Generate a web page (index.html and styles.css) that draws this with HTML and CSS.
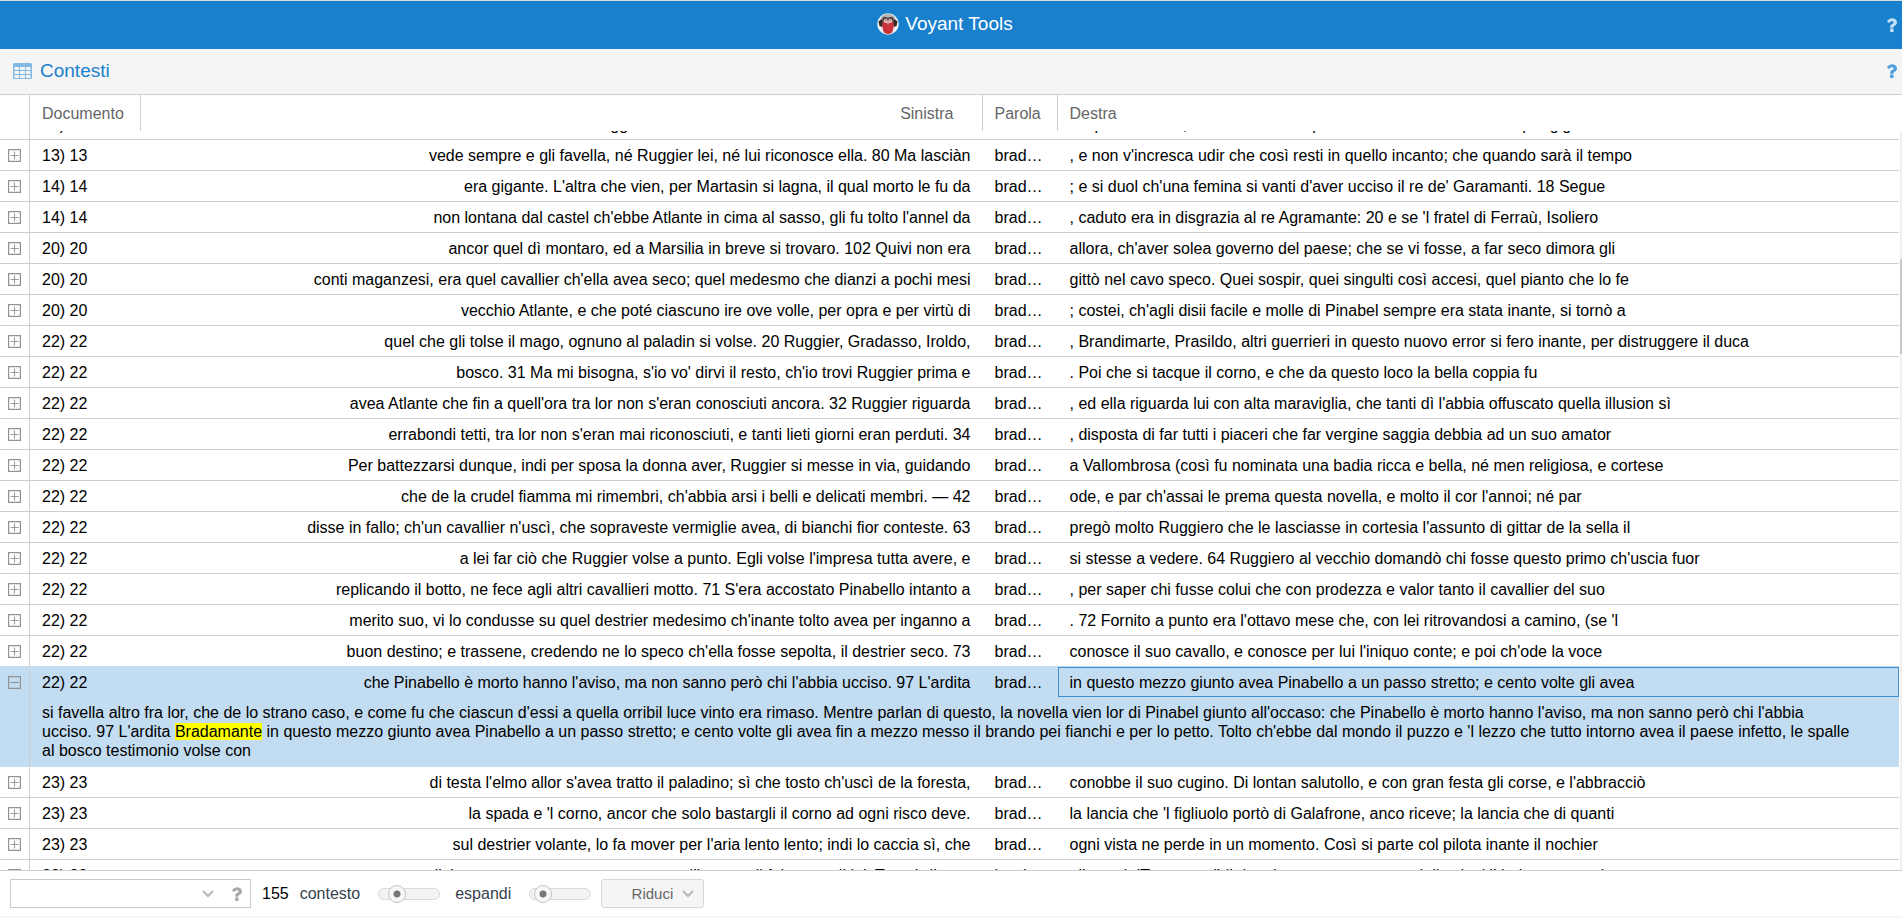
FILE: index.html
```html
<!DOCTYPE html>
<html lang="it">
<head>
<meta charset="utf-8">
<title>Voyant Tools</title>
<link rel="stylesheet" href="styles.css">
</head>
<body>
<svg class="defs" aria-hidden="true">
  <symbol id="help" viewBox="384 256 1024 1280"><path d="M1088 1256v240q0 16-12 28t-28 12h-240q-16 0-28-12t-12-28v-240q0-16 12-28t28-12h240q16 0 28 12t12 28zm316-600q0 54-15.500 101t-35 76.500-55 59.500-57.500 43.500-61 35.500q-41 23-68.500 65t-27.500 67q0 17-12 32.500t-28 15.500h-240q-15 0-25.500-18.500t-10.500-37.500v-45q0-83 65-156.500t143-108.500q59-27 84-56t25-76q0-42-46.500-74t-107.500-32q-65 0-108 29-35 25-107 115-13 16-31 16-12 0-25-8l-164-125q-13-10-15.500-25t5.500-28q160-266 464-266 80 0 161 31t146 83 106 127.500 41 158.500z"/></symbol>
  <symbol id="plus" viewBox="0 0 13 13"><path d="M.6.6h11.800v11.800H.6z" fill="none" stroke="#939393" stroke-width="1.250"/><path d="M2.500 6.500h8M6.500 2.500v8" stroke="#9c9c9c" stroke-width="1.100"/></symbol>
  <symbol id="minus" viewBox="0 0 13 13"><path d="M.6.6h11.800v11.800H.6z" fill="none" stroke="#939393" stroke-width="1.250"/><path d="M2.500 6.500h8" stroke="#939393" stroke-width="1.100"/></symbol>
  <symbol id="chevron" viewBox="0 0 12 8"><path d="M1 1l5 5 5-5" fill="none" stroke="#b8b8b8" stroke-width="2"/></symbol>
</svg>
<div class="app">
  <header class="titlebar">
    <h1 class="brand">
      <svg class="logo" viewBox="0 0 22 22" aria-hidden="true">
        <circle cx="11" cy="11" r="10.700" fill="#eef0f1"/>
        <path d="M3.500 5Q11-3.500 18.500 5L17 7H5z" fill="#b3b6b8"/>
        <path d="M1.500 8.500l3-2.500 2 3-1.500 5-2.500-1z" fill="#33292b"/>
        <path d="M20.500 8.500l-3-2.500-2 3 1.500 5 2.500-1z" fill="#33292b"/>
        <path d="M5.500 4.500L8 3.500l1.500 1h3L14 3.500l2.500 1 .5 5H5z" fill="#5a4346"/>
        <path d="M5.500 9q5.500-2.500 11 0 1 7-2 11-3.500 2-7 0-3-4-2-11z" fill="#c8323b"/>
        <circle cx="8.800" cy="8" r="2.100" fill="#edc9ca"/><circle cx="13.200" cy="8" r="2.100" fill="#edc9ca"/>
        <circle cx="9" cy="7.500" r=".7" fill="#6b4a50"/><circle cx="13" cy="7.500" r=".7" fill="#6b4a50"/>
        <path d="M10 9.500h2L11 12z" fill="#f3d5d0"/>
      </svg>
      Voyant Tools
    </h1>
    <button class="tool tool-light" aria-label="Aiuto"><svg><use href="#help"/></svg></button>
  </header>
  <div class="panelbar">
    <svg class="table-icon" viewBox="0 0 19 16" aria-hidden="true"><rect width="19" height="16" rx="1.500" fill="#83b9e3"/><path d="M1.500 4h4.500v3H1.500zM7 4h5v3H7zM13 4h4.500v3H13zM1.500 8h4.500v3H1.500zM7 8h5v3H7zM13 8h4.500v3H13zM1.500 12h4.500v3H1.500zM7 12h5v3H7zM13 12h4.500v3H13z" fill="#f5f5f5"/></svg>
    <h2 class="panel-title">Contesti</h2>
    <button class="tool tool-blue" aria-label="Aiuto Contesti"><svg><use href="#help"/></svg></button>
  </div>
  <table class="grid grid-head">
    <colgroup><col class="c-exp"><col class="c-doc"><col><col class="c-word"><col></colgroup>
    <thead><tr><th></th><th scope="col">Documento</th><th scope="col" class="left">Sinistra</th><th scope="col">Parola</th><th scope="col">Destra</th></tr></thead>
  </table>
  <main class="viewport">
    <div class="rows">
      <table class="grid grid-body" aria-label="Contesti">
        <colgroup><col class="c-exp"><col class="c-doc"><col><col class="c-word"><col></colgroup>
        <tbody id="rows"></tbody>
      </table>
    </div>
    <div class="scrollbar"><div class="thumb"></div></div>
  </main>
  <footer class="toolbar">
    <div class="combo">
      <input type="text" class="combo-input" aria-label="Cerca">
      <button class="combo-btn" aria-label="Apri"><svg class="chevron"><use href="#chevron"/></svg></button>
      <button class="combo-btn combo-help" aria-label="Aiuto ricerca"><svg><use href="#help"/></svg></button>
    </div>
    <span class="count">155</span>
    <label class="slider-label" for="context">contesto</label>
    <input class="slider" id="context" type="range" min="0" max="100" value="22">
    <label class="slider-label" for="expand">espandi</label>
    <input class="slider" id="expand" type="range" min="0" max="100" value="8">
    <button class="scale">Riduci <svg class="chevron"><use href="#chevron"/></svg></button>
  </footer>
</div>
<script src="rows.js"></script>
</body>
</html>
```

FILE: styles.css
```css
* { box-sizing: border-box; }
body { margin: 0; font: 16px/19px "Liberation Sans", Arial, sans-serif; color: #000; background: #fff; }
button { padding: 0; border: 0; background: none; font: inherit; }
h1, h2 { margin: 0; font-size: 19px; font-weight: 400; }
.defs { position: absolute; width: 0; height: 0; }
.app { height: 100vh; display: flex; flex-direction: column; overflow: hidden; border-bottom: 2px solid #f5f5f5; }

.titlebar { flex: none; display: flex; align-items: center; height: 49px; padding-right: 5px; border-top: 1px solid #d9dde0; background: #1880cd; color: #fff; }
.brand { flex: 1; display: flex; align-items: center; justify-content: center; gap: 6px; line-height: 22px; padding: 0 0 2px 4px; }
.logo { width: 22px; height: 22px; }
.tool svg, .combo-help svg { display: block; width: 11px; height: 14px; }
.tool-light { fill: #c5dff3; }
.tool-blue { margin-left: auto; fill: #4d9fde; }

.panelbar { flex: none; display: flex; align-items: center; gap: 8px; height: 46px; padding: 0 5px 2px 13px; border-bottom: 1px solid #cfcfcf; background: #f5f5f5; color: #1b80cd; }
.table-icon { width: 19px; height: 16px; }

.grid { width: 100%; table-layout: fixed; border-collapse: separate; border-spacing: 0; }
.grid th, .grid td { padding: 0 12px; overflow: hidden; white-space: nowrap; text-overflow: ellipsis; text-align: left; font-weight: 400; }
.c-exp { width: 30px; }
.c-doc { width: 111px; }
.c-word { width: 75px; }
.grid-head { flex: none; padding-right: 3px; }
.grid-head th { height: 36px; border-right: 1px solid #cfcfcf; color: #666; }
.grid-head th:last-child { border-right: 0; }
.grid-head th.left { padding-right: 28px; text-align: right; }

.viewport { flex: 1; min-height: 0; display: flex; gap: 1px; overflow: hidden; border-bottom: 1px solid #cfcfcf; }
.rows { flex: 1; min-width: 0; overflow: hidden; }
.grid-body { margin-top: -22px; }
.grid-body td { height: 31px; border-bottom: 1px solid #cfcfcf; }
.grid-body td.left { text-align: right; }
.grid-body td.exp { padding: 0 0 0 8px; border-right: 1px solid #cfcfcf; }
.exp button, .exp svg { display: block; width: 13px; height: 13px; }
.grid-body .before td { border-bottom-color: #c1dcf1; }
.grid-body .selected td { height: 30px; border-bottom: 0; background: #c2dcf1; }
.grid-body .selected .focus { outline: 1px solid #3d90d2; outline-offset: -1px; }
.grid-body .detail td { border-bottom: 0; background: #c2dcf1; }
.grid-body .detail .full { padding: 6px 12px 7px; white-space: normal; }
mark { background: #ff0; color: #000; }

.scrollbar { width: 2px; padding-top: 128px; background: #f1f1f1; }
.thumb { height: 95px; background: #c8c8c8; }

.toolbar { flex: none; display: flex; align-items: center; height: 45px; padding: 0 10px; }
.combo { display: flex; align-items: center; width: 241px; height: 29px; margin-right: 11px; border: 1px solid #cbcbcb; }
.combo-input { flex: 1; min-width: 0; height: 27px; padding: 0 8px; border: 0; background: none; font: inherit; }
.combo-btn { display: flex; justify-content: center; width: 28px; }
.combo-help { fill: #a8a8a8; }
.chevron { display: block; width: 12px; height: 8px; }
.count { margin-right: 11px; }
.slider-label { color: #36424d; }
.slider { appearance: none; width: 62px; height: 20px; margin: 0 15px 0 18px; background: none; }
.slider::-webkit-slider-runnable-track { height: 12px; border: 1px solid #dadada; border-radius: 6px; background: #f3f3f3; }
.slider::-webkit-slider-thumb { appearance: none; width: 18px; height: 18px; margin-top: -4px; border: 1px solid #c4c4c4; border-radius: 50%; background: radial-gradient(circle, #777 0 3px, #f7f7f7 4px); }
#expand { margin-right: 10px; }
.scale { display: flex; align-items: center; justify-content: flex-end; gap: 9px; width: 103px; height: 29px; padding-right: 9px; border: 1px solid #d8d8d8; border-radius: 3px; background: #f5f5f5; color: #666; font-size: 15px; }
```

FILE: rows.js
```js
const rows = [
  ["13) 13", "era con lui allora il buon Ruggier che non sa in che modo ritrovar la donna sua", "la speranza mia, che mi fu tolta in parte dal mondo senza alcun per gigli"],
  ["13) 13", "vede sempre e gli favella, né Ruggier lei, né lui riconosce ella. 80 Ma lasciàn", ", e non v'incresca udir che così resti in quello incanto; che quando sarà il tempo"],
  ["14) 14", "era gigante. L'altra che vien, per Martasin si lagna, il qual morto le fu da", "; e si duol ch'una femina si vanti d'aver ucciso il re de' Garamanti. 18 Segue"],
  ["14) 14", "non lontana dal castel ch'ebbe Atlante in cima al sasso, gli fu tolto l'annel da", ", caduto era in disgrazia al re Agramante: 20 e se 'l fratel di Ferraù, Isoliero"],
  ["20) 20", "ancor quel dì montaro, ed a Marsilia in breve si trovaro. 102 Quivi non era", "allora, ch'aver solea governo del paese; che se vi fosse, a far seco dimora gli"],
  ["20) 20", "conti maganzesi, era quel cavallier ch'ella avea seco; quel medesmo che dianzi a pochi mesi", "gittò nel cavo speco. Quei sospir, quei singulti così accesi, quel pianto che lo fe"],
  ["20) 20", "vecchio Atlante, e che poté ciascuno ire ove volle, per opra e per virtù di", "; costei, ch'agli disii facile e molle di Pinabel sempre era stata inante, si tornò a"],
  ["22) 22", "quel che gli tolse il mago, ognuno al paladin si volse. 20 Ruggier, Gradasso, Iroldo,", ", Brandimarte, Prasildo, altri guerrieri in questo nuovo error si fero inante, per distruggere il duca"],
  ["22) 22", "bosco. 31 Ma mi bisogna, s'io vo' dirvi il resto, ch'io trovi Ruggier prima e", ". Poi che si tacque il corno, e che da questo loco la bella coppia fu"],
  ["22) 22", "avea Atlante che fin a quell'ora tra lor non s'eran conosciuti ancora. 32 Ruggier riguarda", ", ed ella riguarda lui con alta maraviglia, che tanti dì l'abbia offuscato quella illusion sì"],
  ["22) 22", "errabondi tetti, tra lor non s'eran mai riconosciuti, e tanti lieti giorni eran perduti. 34", ", disposta di far tutti i piaceri che far vergine saggia debbia ad un suo amator"],
  ["22) 22", "Per battezzarsi dunque, indi per sposa la donna aver, Ruggier si messe in via, guidando", "a Vallombrosa (così fu nominata una badia ricca e bella, né men religiosa, e cortese"],
  ["22) 22", "che de la crudel fiamma mi rimembri, ch'abbia arsi i belli e delicati membri. — 42", "ode, e par ch'assai le prema questa novella, e molto il cor l'annoi; né par"],
  ["22) 22", "disse in fallo; ch'un cavallier n'uscì, che sopraveste vermiglie avea, di bianchi fior conteste. 63", "pregò molto Ruggiero che le lasciasse in cortesia l'assunto di gittar de la sella il"],
  ["22) 22", "a lei far ciò che Ruggier volse a punto. Egli volse l'impresa tutta avere, e", "si stesse a vedere. 64 Ruggiero al vecchio domandò chi fosse questo primo ch'uscia fuor"],
  ["22) 22", "replicando il botto, ne fece agli altri cavallieri motto. 71 S'era accostato Pinabello intanto a", ", per saper chi fusse colui che con prodezza e valor tanto il cavallier del suo"],
  ["22) 22", "merito suo, vi lo condusse su quel destrier medesimo ch'inante tolto avea per inganno a", ". 72 Fornito a punto era l'ottavo mese che, con lei ritrovandosi a camino, (se 'l"],
  ["22) 22", "buon destino; e trassene, credendo ne lo speco ch'ella fosse sepolta, il destrier seco. 73", "conosce il suo cavallo, e conosce per lui l'iniquo conte; e poi ch'ode la voce"],
  ["22) 22", "che Pinabello è morto hanno l'aviso, ma non sanno però chi l'abbia ucciso. 97 L'ardita", "in questo mezzo giunto avea Pinabello a un passo stretto; e cento volte gli avea",
    "si favella altro fra lor, che de lo strano caso, e come fu che ciascun d'essi a quella orribil luce vinto era rimaso. Mentre parlan di questo, la novella vien lor di Pinabel giunto all'occaso: che Pinabello è morto hanno l'aviso, ma non sanno però chi l'abbia<br>ucciso. 97 L'ardita <mark>Bradamante</mark> in questo mezzo giunto avea Pinabello a un passo stretto; e cento volte gli avea fin a mezzo messo il brando pei fianchi e per lo petto. Tolto ch'ebbe dal mondo il puzzo e 'l lezzo che tutto intorno avea il paese infetto, le spalle<br>al bosco testimonio volse con"],
  ["23) 23", "di testa l'elmo allor s'avea tratto il paladino; sì che tosto ch'uscì de la foresta,", "conobbe il suo cugino. Di lontan salutollo, e con gran festa gli corse, e l'abbracciò"],
  ["23) 23", "la spada e 'l corno, ancor che solo bastargli il corno ad ogni risco deve.", "la lancia che 'l figliuolo portò di Galafrone, anco riceve; la lancia che di quanti"],
  ["23) 23", "sul destrier volante, lo fa mover per l'aria lento lento; indi lo caccia sì, che", "ogni vista ne perde in un momento. Così si parte col pilota inante il nochier"],
  ["23) 23", "l'altro estremo, e come era venuto all'usanza il fe' restar di lei. Tra sé diceva", "allo uscir 'Tratto un dì il destrier verso un monte, della citta' il bel muro era d"]
];

const cells = ([doc, left, right], icon, name) =>
  `<td class="exp"><button aria-label="${name}"><svg><use href="#${icon}"/></svg></button></td><td>${doc}</td><td class="left">${left}</td><td>bradamante</td>`;

document.getElementById("rows").innerHTML = rows.map((row, i) => {
  if (row[3]) {
    return `<tr class="selected">${cells(row, "minus", "Comprimi")}<td class="focus">${row[2]}</td></tr>` +
      `<tr class="detail"><td class="exp"></td><td class="full" colspan="4">${row[3]}</td></tr>`;
  }
  const before = rows[i + 1] && rows[i + 1][3];
  return `<tr${before ? ' class="before"' : ""}>${cells(row, "plus", "Espandi")}<td>${row[2]}</td></tr>`;
}).join("");
```
